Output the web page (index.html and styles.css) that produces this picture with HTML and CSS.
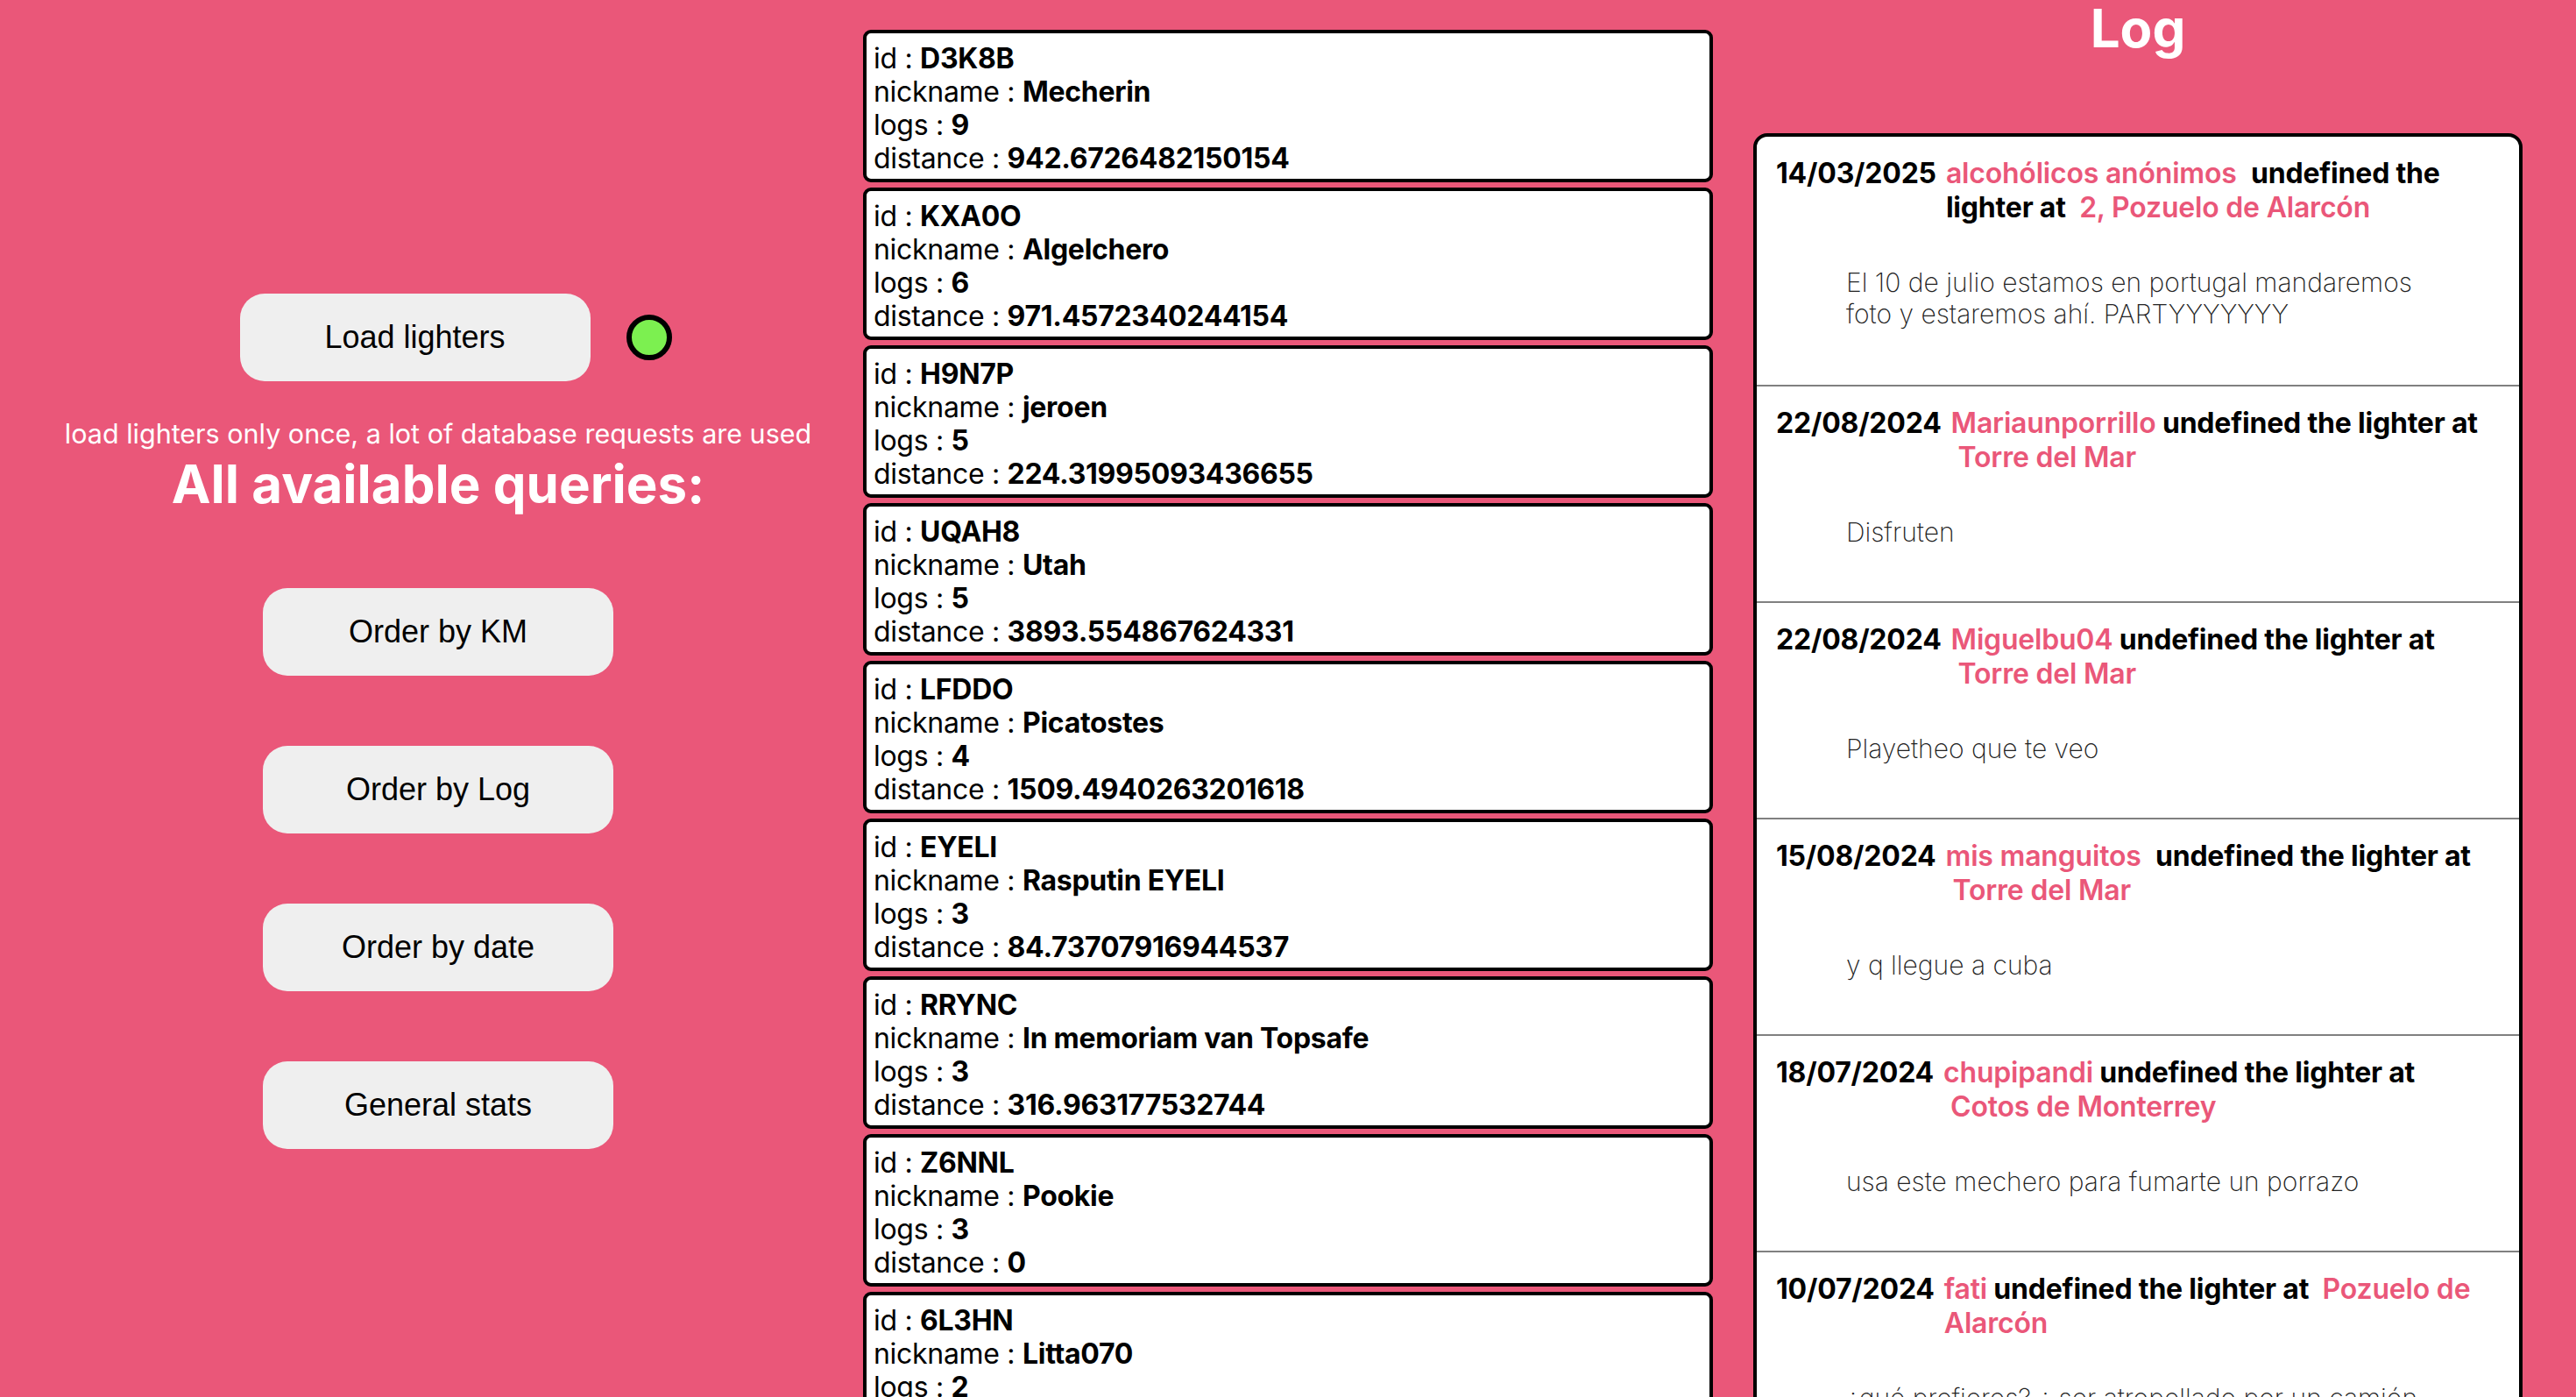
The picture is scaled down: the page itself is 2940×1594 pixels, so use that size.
FILE: index.html
```html
<!DOCTYPE html>
<html lang="en">
<head>
<meta charset="utf-8">
<title>Lighters</title>
<link rel="stylesheet" href="styles.css">
</head>
<body>
<main class="page">
  <section class="queries">
    <div class="load-row">
      <button class="btn">Load lighters</button>
      <span class="status-dot"></span>
    </div>
    <p class="note">load lighters only once, a lot of database requests are used</p>
    <h2 class="queries-title">All available queries:</h2>
    <div class="query-list">
      <button class="btn">Order by KM</button>
      <button class="btn">Order by Log</button>
      <button class="btn">Order by date</button>
      <button class="btn">General stats</button>
    </div>
  </section>

  <section class="lighters">
    <div class="card">
      <div>id : <b>D3K8B</b></div>
      <div>nickname : <b>Mecherin</b></div>
      <div>logs : <b>9</b></div>
      <div>distance : <b>942.6726482150154</b></div>
    </div>
    <div class="card">
      <div>id : <b>KXA0O</b></div>
      <div>nickname : <b>Algelchero</b></div>
      <div>logs : <b>6</b></div>
      <div>distance : <b>971.4572340244154</b></div>
    </div>
    <div class="card">
      <div>id : <b>H9N7P</b></div>
      <div>nickname : <b>jeroen</b></div>
      <div>logs : <b>5</b></div>
      <div>distance : <b>224.31995093436655</b></div>
    </div>
    <div class="card">
      <div>id : <b>UQAH8</b></div>
      <div>nickname : <b>Utah</b></div>
      <div>logs : <b>5</b></div>
      <div>distance : <b>3893.554867624331</b></div>
    </div>
    <div class="card">
      <div>id : <b>LFDDO</b></div>
      <div>nickname : <b>Picatostes</b></div>
      <div>logs : <b>4</b></div>
      <div>distance : <b>1509.4940263201618</b></div>
    </div>
    <div class="card">
      <div>id : <b>EYELI</b></div>
      <div>nickname : <b>Rasputin EYELI</b></div>
      <div>logs : <b>3</b></div>
      <div>distance : <b>84.73707916944537</b></div>
    </div>
    <div class="card">
      <div>id : <b>RRYNC</b></div>
      <div>nickname : <b>In memoriam van Topsafe</b></div>
      <div>logs : <b>3</b></div>
      <div>distance : <b>316.963177532744</b></div>
    </div>
    <div class="card">
      <div>id : <b>Z6NNL</b></div>
      <div>nickname : <b>Pookie</b></div>
      <div>logs : <b>3</b></div>
      <div>distance : <b>0</b></div>
    </div>
    <div class="card">
      <div>id : <b>6L3HN</b></div>
      <div>nickname : <b>Litta070</b></div>
      <div>logs : <b>2</b></div>
      <div>distance : <b>0</b></div>
    </div>
  </section>

  <section class="log">
    <h1 class="log-title">Log</h1>
    <div class="log-box">
      <article class="entry">
        <div class="entry-head">
          <span class="date">14/03/2025</span>
          <span class="what"><span class="who who-pad">alcohólicos anónimos</span> undefined the lighter at <span class="where">2, Pozuelo de Alarcón</span></span>
        </div>
        <p class="comment">El 10 de julio estamos en portugal mandaremos foto y estaremos ahí. PARTYYYYYYY</p>
      </article>
      <article class="entry">
        <div class="entry-head">
          <span class="date">22/08/2024</span>
          <span class="what"><span class="who">Mariaunporrillo</span> undefined the lighter at <span class="where">Torre del Mar</span></span>
        </div>
        <p class="comment">Disfruten</p>
      </article>
      <article class="entry">
        <div class="entry-head">
          <span class="date">22/08/2024</span>
          <span class="what"><span class="who">Miguelbu04</span> undefined the lighter at <span class="where">Torre del Mar</span></span>
        </div>
        <p class="comment">Playetheo que te veo</p>
      </article>
      <article class="entry">
        <div class="entry-head">
          <span class="date">15/08/2024</span>
          <span class="what"><span class="who who-pad">mis manguitos</span> undefined the lighter at <span class="where">Torre del Mar</span></span>
        </div>
        <p class="comment">y q llegue a cuba</p>
      </article>
      <article class="entry">
        <div class="entry-head">
          <span class="date">18/07/2024</span>
          <span class="what"><span class="who">chupipandi</span> undefined the lighter at <span class="where">Cotos de Monterrey</span></span>
        </div>
        <p class="comment">usa este mechero para fumarte un porrazo</p>
      </article>
      <article class="entry">
        <div class="entry-head">
          <span class="date">10/07/2024</span>
          <span class="what"><span class="who">fati</span> undefined the lighter at <span class="where">Pozuelo de Alarcón</span></span>
        </div>
        <p class="comment">¿qué prefieres? ¿ ser atropellado por un camión</p>
      </article>
    </div>
  </section>
</main>
</body>
</html>
```

FILE: styles.css
```css
html, body {
  margin: 0;
  padding: 0;
}

body {
  background: #ea5779;
  font-family: Inter, "Noto Sans", sans-serif;
  color: #000;
}

.page {
  display: grid;
  grid-template-columns: 985px 970px 1fr;
  align-items: start;
}

/* ---------- left column ---------- */
.queries {
  display: flex;
  flex-direction: column;
  align-items: center;
  padding: 335px 0 0 15px;
}

.load-row {
  display: flex;
  align-items: center;
  gap: 41px;
  padding-left: 40px;
}

.btn {
  width: 400px;
  height: 100px;
  border: none;
  border-radius: 28px;
  background: #efefef;
  color: #000;
  font-family: "Liberation Sans", Arial, sans-serif;
  font-size: 36px;
  padding: 0;
}

.status-dot {
  width: 40px;
  height: 40px;
  border: 6px solid #000;
  border-radius: 50%;
  background: #7cf050;
  flex: none;
}

.note {
  margin: 42px 0 0;
  color: #fff;
  font-size: 30.5px;
  line-height: 36px;
  white-space: nowrap;
}

.queries-title {
  margin: 3px 0 0;
  color: #fff;
  font-size: 60px;
  font-weight: 700;
  line-height: 73px;
}

.query-list {
  display: flex;
  flex-direction: column;
  gap: 80px;
  margin-top: 82px;
}

/* ---------- middle column ---------- */
.lighters {
  display: flex;
  flex-direction: column;
  gap: 6px;
  padding-top: 34px;
}

.card {
  background: #fff;
  border: 4px solid #000;
  border-radius: 9px;
  padding: 10px 8px 4px;
  font-size: 32px;
  line-height: 38px;
  letter-spacing: -0.3px;
}

.card b {
  font-weight: 700;
}

/* ---------- right column ---------- */
.log {
  padding: 0 61px 0 46px;
}

.log-title {
  margin: 2px 0 0;
  text-align: center;
  color: #fff;
  font-size: 60px;
  font-weight: 700;
  line-height: 60px;
}

.log-box {
  margin-top: 90px;
  background: #fff;
  border: 4px solid #000;
  border-radius: 16px;
}

.entry {
  padding: 22px 36px 61px 22px;
}

.entry:first-child {
  padding-bottom: 63px;
}

.entry + .entry {
  border-top: 2px solid #808080;
}

.entry-head {
  display: flex;
  font-size: 32px;
  line-height: 39px;
  font-weight: 700;
  letter-spacing: -0.2px;
}

.date {
  flex: none;
  margin-right: 11px;
}

.what {
  flex: 1;
}

.who {
  color: #ea5779;
  font-weight: 600;
}

.who-pad {
  margin-right: 9px;
}

.where {
  color: #ea5779;
  font-weight: 600;
  margin-left: 8px;
}

.comment {
  margin: 48px 0 0;
  padding-left: 80px;
  padding-right: 26px;
  font-size: 30px;
  line-height: 36px;
  font-weight: 200;
  color: #222;
}
```
